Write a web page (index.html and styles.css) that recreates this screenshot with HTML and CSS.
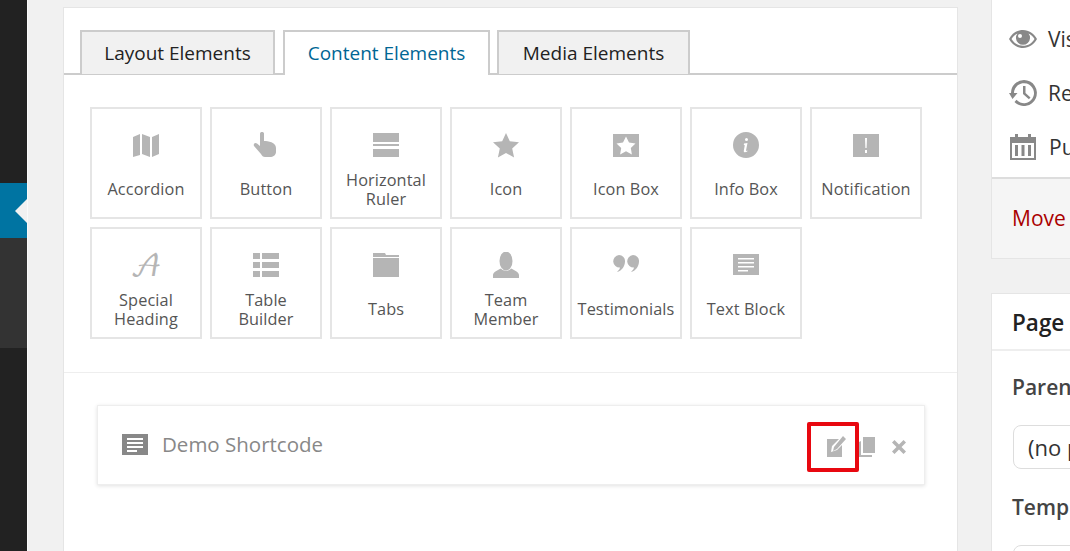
FILE: index.html
```html
<!DOCTYPE html>
<html lang="en">
    <head>
        <meta charset="UTF-8">
        <title>Edit Page</title>
        <link rel="stylesheet" href="styles.css">
    </head>
    <body>
        <!-- admin menu -->
        <div class="adminMenu">
            <div class="menuTop"></div>
            <div class="menuCurrent"><span class="menuArrow"></span></div>
            <div class="menuSub"></div>
        </div>

        <div class="content">
            <!-- builder -->
            <div class="builder">
                <div class="tabs">
                    <div class="tab">Layout Elements</div>
                    <div class="tab tabActive">Content Elements</div>
                    <div class="tab tabMedia">Media Elements</div>
                </div>

                <div class="tiles">
                    <div class="tile">
                        <svg class="tileIcon" viewBox="0 0 26 26"><path d="M0 5l7-3v21l-7 2zM9 2l8 3v20l-8-3zM19 5l7-3v20l-7 3z"/></svg>
                        <div class="tileLabel">Accordion</div>
                    </div>
                    <div class="tile">
                        <svg class="tileIcon" viewBox="0 0 26 26"><path d="M7 1.500c0-2 4-2 4 0V9c4 0 12 1 12 7v4c0 3-3 5-6 5h-5c-2 0-3-1-4-3L1 14c-1-2 1-4 3-2.500l3 2.500z"/></svg>
                        <div class="tileLabel">Button</div>
                    </div>
                    <div class="tile">
                        <svg class="tileIcon" viewBox="0 0 26 26"><path d="M0 1h26v9H0zM0 12h26v2H0zM0 17h26v8H0z"/></svg>
                        <div class="tileLabel">Horizontal<br>Ruler</div>
                    </div>
                    <div class="tile">
                        <svg class="tileIcon" viewBox="0 0 26 26"><path d="M13 1l3.800 8.300 9.200 1-6.800 6.200 1.900 9L13 21l-8.100 4.500 1.900-9L0 10.300l9.200-1z"/></svg>
                        <div class="tileLabel">Icon</div>
                    </div>
                    <div class="tile">
                        <svg class="tileIcon" viewBox="0 0 26 26"><path fill-rule="evenodd" d="M0 2h26v23H0zM13 4.500l-3 6-6.500.9 4.700 4.500-1.100 6.500 5.900-3.100 5.900 3.100-1.100-6.500 4.700-4.500-6.500-.9z"/></svg>
                        <div class="tileLabel">Icon Box</div>
                    </div>
                    <div class="tile">
                        <svg class="tileIcon" viewBox="0 0 26 26"><path fill-rule="evenodd" d="M13 0a13 13 0 1 0 0 26a13 13 0 0 0 0-26zM13.500 6a1.500 1.500 0 1 1 0 3a1.500 1.500 0 0 1 0-3zM11 11.500l3.500-.5-1.500 7.500c-.1.600.3.700 1.300 0l.2.700c-1.700 1.300-4 1.700-3.700-.5l1-5.500-1-.2z"/></svg>
                        <div class="tileLabel">Info Box</div>
                    </div>
                    <div class="tile">
                        <svg class="tileIcon" viewBox="0 0 26 26"><path fill-rule="evenodd" d="M0 2h26v23H0zM12 6l.4 10h1.200L14 6zM12 18v3h2v-3z"/></svg>
                        <div class="tileLabel">Notification</div>
                    </div>

                    <div class="tile">
                        <div class="scriptIcon">&#x1D49C;</div>
                        <div class="tileLabel">Special<br>Heading</div>
                    </div>
                    <div class="tile">
                        <svg class="tileIcon" viewBox="0 0 26 26"><path d="M0 1h7v6H0zM9 1h17v6H9zM0 10h7v6H0zM9 10h17v6H9zM0 19h7v6H0zM9 19h17v6H9z"/></svg>
                        <div class="tileLabel">Table<br>Builder</div>
                    </div>
                    <div class="tile">
                        <svg class="tileIcon" viewBox="0 0 26 26"><path d="M0 1h12l1 2h13v2H0zM0 6h26v19H0z"/></svg>
                        <div class="tileLabel">Tabs</div>
                    </div>
                    <div class="tile">
                        <svg class="tileIcon" viewBox="0 0 26 26"><ellipse cx="13" cy="9" rx="6.500" ry="9.500"/><path d="M0 26v-3c0-3 5-5 8-6.500 2 3 8 3 10 0 3 1.500 8 3.500 8 6.500v3z"/></svg>
                        <div class="tileLabel">Team<br>Member</div>
                    </div>
                    <div class="tile">
                        <svg class="tileIcon" viewBox="0 0 26 26"><path d="M6 3a6 6 0 0 1 6 6.500c0 5-3.500 9.500-8 10.500 2-2 3-3.500 3-4.500A6 6 0 0 1 6 3zM20 3a6 6 0 0 1 6 6.500c0 5-3.500 9.500-8 10.500 2-2 3-3.500 3-4.500A6 6 0 0 1 20 3z"/></svg>
                        <div class="tileLabel">Testimonials</div>
                    </div>
                    <div class="tile">
                        <svg class="tileIcon" viewBox="0 0 26 26"><path fill-rule="evenodd" d="M0 2h26v21H0zM5 6v1.500h16V6zM5 10v1.500h16V10zM5 14v1.500h16V14zM5 18v1.500h10V18z"/></svg>
                        <div class="tileLabel">Text Block</div>
                    </div>
                </div>

                <!-- added shortcode -->
                <div class="shortcodes">
                    <div class="shortcode">
                        <svg class="shortcodeIcon" viewBox="0 0 26 22"><path fill-rule="evenodd" d="M0 0h26v21H0zM5 4v2h16V4zM5 8v2h16V8zM5 12v2h16v-2zM5 16v2h10v-2z"/></svg>
                        <div class="shortcodeTitle">Demo Shortcode</div>
                        <div class="shortcodeActions">
                            <div class="editHighlight">
                                <svg class="actionIcon" width="20" height="22" viewBox="0 0 20 22"><path d="M0 3h12L5 10l-1 6 6-2 5-5v12H0zM16 0l3 3-9 10-4 2 1-4z"/></svg>
                            </div>
                            <svg class="actionIcon copyIcon" width="16" height="21" viewBox="0 0 16 21"><path d="M4 0h12v16H4zM2 4v14h11v2H0V5z"/></svg>
                            <svg class="actionIcon closeIcon" width="14" height="14" viewBox="0 0 14 14"><path d="M2.500 0L7 4.500 11.500 0 14 2.500 9.500 7 14 11.500 11.500 14 7 9.500 2.500 14 0 11.500 4.500 7 0 2.500z"/></svg>
                        </div>
                    </div>
                </div>
            </div>

            <!-- right column -->
            <div class="sideColumn">
                <div class="sideBox publishBox">
                    <div class="pubRows">
                        <div class="pubRow">
                            <svg class="pubIcon" width="28" height="20" viewBox="0 0 28 20"><path fill-rule="evenodd" d="M14 1c6 0 11 3.500 14 9-3 5.500-8 9-14 9S3 15.500 0 10c3-5.500 8-9 14-9zM2.500 10c2.500 4 6 6.800 11.500 6.800S23 14 25.500 10c-1.500-2.500-3.500-4.300-6-5.500a7 7 0 1 1-11 0c-2.500 1.200-4.500 3-6 5.500zM11 5a2 2 0 1 0 0 4a2 2 0 0 0 0-4z"/></svg>
                            <span>Visibility</span>
                        </div>
                        <div class="pubRow">
                            <svg class="pubIcon" width="28" height="26" viewBox="0 0 28 26"><path fill-rule="evenodd" d="M15 0a13 13 0 1 1-9.500 22l2-2.200A10 10 0 1 0 5 13h3.500L3.500 19 0 13h2A13 13 0 0 1 15 0zM14 6h2.500v7l5 4.500-1.600 1.800-5.900-5.300z"/></svg>
                            <span>Revisions</span>
                        </div>
                        <div class="pubRow">
                            <svg class="pubIcon calendarIcon" width="26" height="26" viewBox="0 0 26 26"><path fill-rule="evenodd" d="M0 3h5V0h3v3h10V0h3v3h5v23H0zM2 9v15h22V9zM5 11h3v11H5zM11.500 11h3v11h-3zM18 11h3v11h-3z"/></svg>
                            <span>Publish</span>
                        </div>
                    </div>
                    <div class="pubActions"><span class="moveLink">Move to Trash</span></div>
                </div>

                <div class="sideBox pageBox">
                    <div class="pageHead">Page Attributes</div>
                    <div class="pageBody">
                        <div class="fieldLabel">Parent</div>
                        <div class="fakeSelect">(no parent)</div>
                        <div class="fieldLabel templateLabel">Template</div>
                        <div class="fakeSelect">Default</div>
                    </div>
                </div>
            </div>
        </div>
    </body>
</html>
```

FILE: styles.css
```css
html, body{
    margin: 0;
    height: 551px;
    overflow: hidden;
}

body{
    display: flex;
    background-color: rgb(241, 241, 241);
    font-family: "Open Sans", sans-serif;
    color: rgb(68, 68, 68);
}

/*************************************************************************************************/

/* admin menu */
.adminMenu{
    flex: none;
    width: 27px;
    border-right: 1px solid rgb(250, 250, 250);
    background-color: rgb(34, 34, 34);
}

.menuTop{
    height: 183px;
}

.menuCurrent{
    display: flex;
    align-items: center;
    justify-content: flex-end;
    height: 55px;
    background-color: rgb(0, 116, 162);
}

.menuArrow{
    width: 0;
    height: 0;
    border: solid transparent;
    border-width: 12px 12px 12px 0;
    border-right-color: rgb(241, 241, 241);
}

.menuSub{
    height: 110px;
    background-color: rgb(51, 51, 51);
}

/*************************************************************************************************/

.content{
    display: flex;
    flex: 1;
    gap: 33px;
    align-items: flex-start;
    padding-left: 35px;
    min-width: 0;
}

/* builder */
.builder{
    flex: none;
    box-sizing: border-box;
    width: 895px;
    height: 620px;
    margin-top: 7px;
    border: 1px solid rgb(229, 229, 229);
    background-color: white;
}

.tabs{
    display: flex;
    gap: 8px;
    height: 43px;
    margin-top: 22px;
    padding-left: 16px;
    border-bottom: 2px solid rgb(204, 204, 204);
}

.tab{
    box-sizing: border-box;
    width: 195px;
    height: 44px;
    border: 2px solid rgb(204, 204, 204);
    border-bottom: none;
    background-color: rgb(241, 241, 241);
    color: rgb(34, 34, 34);
    font-size: 19px;
    line-height: 43px;
    text-align: center;
}

.tabActive{
    width: 207px;
    height: 45px;
    background-color: white;
    color: rgb(0, 102, 148);
}

.tabMedia{
    width: 193px;
    margin-left: -1px;
}

/*************************************************************************************************/

.tiles{
    display: grid;
    grid-template-columns: repeat(7, 112px);
    grid-auto-rows: 112px;
    gap: 8px;
    padding: 32px 26px 33px;
    border-bottom: 1px solid rgb(238, 238, 238);
}

.tile{
    box-sizing: border-box;
    display: flex;
    flex-direction: column;
    align-items: center;
    border: 2px solid rgb(229, 229, 229);
}

.tileIcon{
    flex: none;
    width: 26px;
    height: 26px;
    margin-top: 23px;
    fill: rgb(181, 181, 181);
}

.scriptIcon{
    flex: none;
    height: 26px;
    margin-top: 25px;
    margin-bottom: -2px;
    color: rgb(181, 181, 181);
    font-family: "DejaVu Math TeX Gyre", "DejaVu Serif", "DejaVu Sans", serif;
    font-size: 30px;
    line-height: 26px;
}

.tileLabel{
    display: flex;
    align-items: center;
    height: 42px;
    margin-top: 11px;
    color: rgb(85, 85, 85);
    font-size: 16.300px;
    letter-spacing: 0.100px;
    line-height: 19.500px;
    text-align: center;
}

/*************************************************************************************************/

/* added shortcode */
.shortcodes{
    padding: 32px 32px 0 33px;
}

.shortcode{
    box-sizing: border-box;
    display: flex;
    align-items: center;
    height: 80px;
    padding-left: 24px;
    border: 1px solid rgb(238, 238, 238);
    box-shadow: 0 1px 4px rgba(0, 0, 0, 0.12);
}

.shortcodeIcon{
    width: 26px;
    height: 22px;
    margin-right: 14px;
    fill: rgb(136, 136, 136);
}

.shortcodeTitle{
    flex: 1;
    margin-bottom: 2px;
    color: rgb(136, 136, 136);
    font-size: 20.500px;
}

.shortcodeActions{
    display: flex;
    align-items: center;
    margin-top: 4px;
    padding-right: 18px;
}

.actionIcon{
    flex: none;
    fill: rgb(181, 181, 181);
}

.editHighlight{
    box-sizing: border-box;
    display: flex;
    align-items: center;
    width: 52px;
    height: 50px;
    padding-left: 16px;
    border: 4px solid rgb(232, 8, 16);
    border-radius: 2px;
}

.copyIcon{
    margin-right: 17px;
}

/*************************************************************************************************/

/* right column */
.sideColumn{
    flex: none;
    width: 200px;
    font-size: 21px;
}

.sideBox{
    border: 1px solid rgb(229, 229, 229);
    background-color: white;
}

.publishBox{
    height: 259px;
    box-sizing: border-box;
    border-top: none;
}

.pubRows{
    height: 177px;
    padding-top: 12px;
    box-sizing: border-box;
}

.pubRow{
    display: flex;
    align-items: center;
    gap: 11px;
    height: 54px;
    padding-left: 17px;
    color: rgb(51, 51, 51);
    white-space: nowrap;
}

.pubIcon{
    flex: none;
    fill: rgb(136, 136, 136);
}

.calendarIcon{
    margin: 0 2px 0 1px;
}

.pubActions{
    height: 81px;
    border-top: 2px solid rgb(221, 221, 221);
    box-sizing: border-box;
    padding: 25px 0 0 20px;
    background-color: rgb(245, 245, 245);
}

.moveLink{
    color: rgb(170, 0, 0);
    white-space: nowrap;
}

.pageBox{
    height: 300px;
    margin-top: 34px;
}

.pageHead{
    height: 57px;
    padding-left: 20px;
    border-bottom: 2px solid rgb(238, 238, 238);
    box-sizing: border-box;
    color: rgb(34, 34, 34);
    font-size: 22.500px;
    font-weight: 600;
    line-height: 57px;
    white-space: nowrap;
}

.pageBody{
    padding: 22px 0 0 20px;
}

.fieldLabel{
    color: rgb(68, 68, 68);
    font-size: 21px;
    font-weight: 600;
    line-height: 28px;
    white-space: nowrap;
}

.templateLabel{
    margin-top: 24px;
}

.fakeSelect{
    box-sizing: border-box;
    width: 190px;
    height: 44px;
    margin: 24px 0 0 1px;
    padding-left: 14px;
    border: 1px solid rgb(221, 221, 221);
    border-radius: 8px;
    color: rgb(51, 51, 51);
    font-size: 22px;
    line-height: 42px;
    white-space: nowrap;
}
```
